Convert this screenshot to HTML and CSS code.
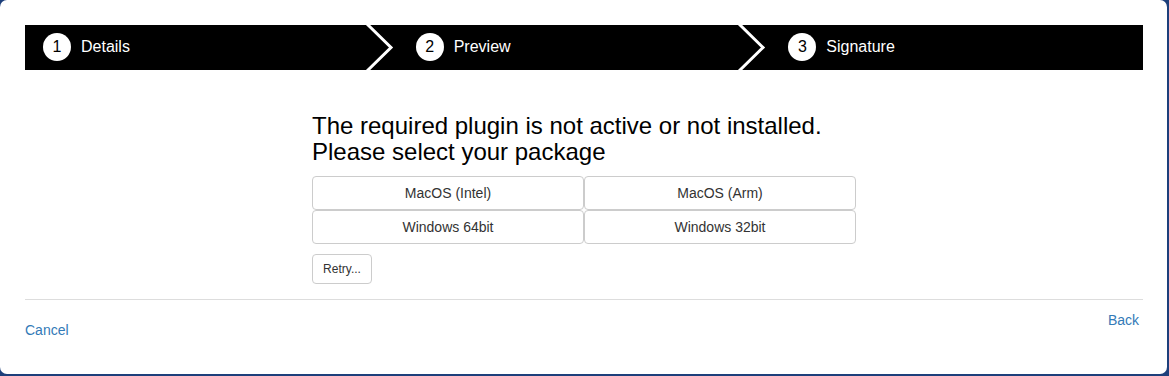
FILE: index.html
```html
<!DOCTYPE html>
<html lang="en">
<head>
    <meta charset="UTF-8">
    <meta name="viewport" content="width=device-width, initial-scale=1.0">
    <title>Signature - Plugin required</title>
    <link rel="stylesheet" href="styles.css">
</head>
<body>
<main class="panel">
    <ol class="steps">
        <li class="step">
            <span class="step-num">1</span>
            <span class="step-label">Details</span>
            <svg class="chevron" width="30" height="45" viewBox="0 0 30 45"><path d="M2 -1 L26 22.5 L2 46" fill="none" stroke="#fff" stroke-width="3"/></svg>
        </li>
        <li class="step">
            <span class="step-num">2</span>
            <span class="step-label">Preview</span>
            <svg class="chevron" width="30" height="45" viewBox="0 0 30 45"><path d="M2 -1 L26 22.5 L2 46" fill="none" stroke="#fff" stroke-width="3"/></svg>
        </li>
        <li class="step">
            <span class="step-num">3</span>
            <span class="step-label">Signature</span>
        </li>
    </ol>

    <section class="content">
        <h3 class="title">The required plugin is not active or not installed.<br>Please select your package</h3>
        <div class="packages">
            <button class="btn">MacOS (Intel)</button>
            <button class="btn">MacOS (Arm)</button>
            <button class="btn">Windows 64bit</button>
            <button class="btn">Windows 32bit</button>
        </div>
        <button class="btn btn-sm">Retry...</button>
    </section>

    <hr class="divider">

    <footer class="footer">
        <a class="link cancel" href="#">Cancel</a>
        <a class="link back" href="#">Back</a>
    </footer>
</main>
</body>
</html>
```

FILE: styles.css
```css
*, *::before, *::after{
    box-sizing: border-box;
    padding: 0;
    margin: 0;
    font-family: "Liberation Sans", Arial, sans-serif;
}

body{
    background-color: #1d3f7b;
    width: 1169px;
    height: 376px;
}

.panel{
    width: 1167px;
    height: 374px;
    background-color: #FFF;
    border-radius: 7px;
    padding: 25px 24px 0 25px;
}

.steps{
    list-style: none;
    display: flex;
    height: 45px;
    background-color: #000;
}

.step{
    flex: 1;
    display: flex;
    align-items: center;
    position: relative;
    padding-left: 18px;
    padding-bottom: 1px;
    color: #FFF;
    font-size: 16px;
}

.step-num{
    width: 28px;
    height: 28px;
    border-radius: 50%;
    background-color: #FFF;
    color: #000;
    display: grid;
    place-content: center;
    font-size: 16px;
    margin-right: 10px;
}

.chevron{
    position: absolute;
    right: 3px;
    top: 0;
}

.content{
    width: 544px;
    margin: 43px auto 0 auto;
}

.title{
    font-size: 24px;
    font-weight: normal;
    line-height: 26px;
    color: #000;
}

.packages{
    margin-top: 11px;
    display: grid;
    grid-template-columns: 1fr 1fr;
    margin-bottom: 10px;
}

.btn{
    height: 34px;
    font-size: 14px;
    color: #333;
    background-color: #FFF;
    border: 1px solid #ccc;
    border-radius: 4px;
    cursor: pointer;
}

.btn-sm{
    height: 30px;
    width: 60px;
    font-size: 12px;
}

.divider{
    border: none;
    border-top: 1px solid #ddd;
    margin-top: 15px;
}

.footer{
    display: flex;
    justify-content: space-between;
    align-items: flex-start;
    padding-right: 4px;
}

.link{
    color: #337ab7;
    font-size: 14px;
    text-decoration: none;
}

.cancel{
    margin-top: 22px;
}

.back{
    margin-top: 12px;
}
```
